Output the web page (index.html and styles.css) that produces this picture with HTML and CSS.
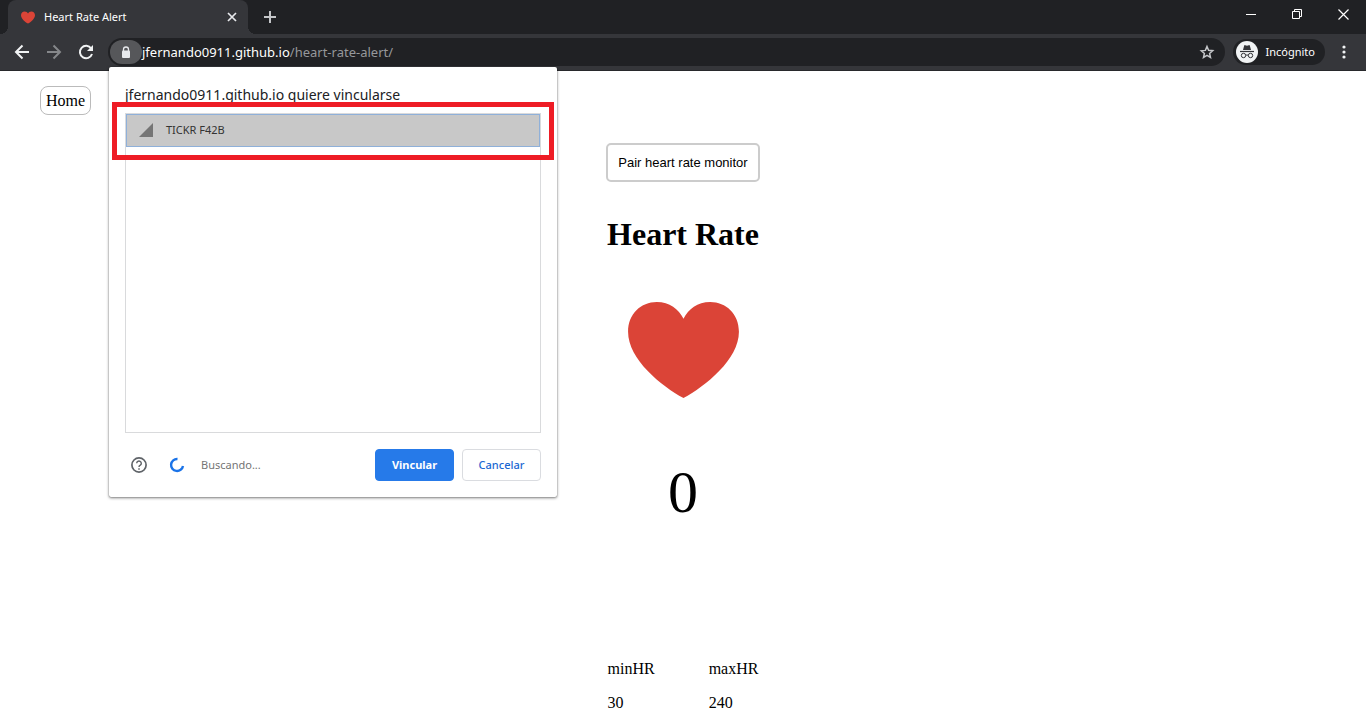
FILE: index.html
```html
<!DOCTYPE html>
<html lang="es">
<head>
<meta charset="utf-8">
<title>Heart Rate Alert</title>
<link rel="stylesheet" href="styles.css">
</head>
<body>
<header class="browser">
  <div class="tabstrip">
    <div class="tab">
      <svg class="favicon" viewBox="0 0 112 97" aria-hidden="true"><path class="heart-fill" d="M56 97C34 85 0 58 0 30C0 12 13 0 29 0C42 0 51 7 56 17C61 7 70 0 83 0C99 0 112 12 112 30C112 58 78 85 56 97Z"/></svg>
      <span class="tab-title">Heart Rate Alert</span>
      <button class="icon-button tab-close" aria-label="Cerrar pestaña"><svg width="10" height="10" viewBox="0 0 10 10"><path d="M1 1l8 8M9 1l-8 8" stroke="#e8eaed" stroke-width="1.700"/></svg></button>
    </div>
    <button class="icon-button new-tab" aria-label="Nueva pestaña"><svg width="12" height="12" viewBox="0 0 12 12"><path d="M6 0v12M0 6h12" stroke="#c4c6c9" stroke-width="2"/></svg></button>
    <div class="window-controls">
      <button class="icon-button" aria-label="Minimizar"><svg width="11" height="11" viewBox="0 0 11 11"><path d="M0 5.500h10" stroke="#fff"/></svg></button>
      <button class="icon-button" aria-label="Restaurar"><svg width="11" height="11" viewBox="0 0 11 11"><path d="M.5 2.500h7v7h-7zM2.500 2.500v-2h7v7h-2" fill="none" stroke="#fff"/></svg></button>
      <button class="icon-button" aria-label="Cerrar"><svg width="11" height="11" viewBox="0 0 11 11"><path d="M.5.5l10 10M10.500.5l-10 10" stroke="#fff" stroke-width="1.200"/></svg></button>
    </div>
  </div>
  <div class="toolbar">
    <button class="icon-button nav" aria-label="Atrás"><svg width="16" height="16" viewBox="0 0 16 16"><path d="M15 8H2M8.500 1.500L2 8l6.500 6.500" fill="none" stroke="#f1f3f4" stroke-width="2"/></svg></button>
    <button class="icon-button nav" aria-label="Adelante"><svg width="16" height="16" viewBox="0 0 16 16"><path d="M1 8h13M7.500 1.500L14 8l-6.500 6.500" fill="none" stroke="#85878a" stroke-width="2"/></svg></button>
    <button class="icon-button nav" aria-label="Recargar"><svg width="16" height="16" viewBox="0 0 16 16"><path d="M13.200 4.500A6.200 6.200 0 1 0 14 10" fill="none" stroke="#f1f3f4" stroke-width="2"/><path d="M15 1v6H9z" fill="#f1f3f4"/></svg></button>
    <div class="omnibox">
      <button class="icon-button lock" aria-label="Información del sitio"><svg width="10" height="13" viewBox="0 0 10 13"><path d="M2.500 5V3.500a2.500 2.500 0 0 1 5 0V5" fill="none" stroke="#e8eaed" stroke-width="1.300"/><rect x="1" y="4.500" width="8" height="7.500" rx="1" fill="#e8eaed"/></svg></button>
      <span class="url"><span class="host">jfernando0911.github.io</span>/heart-rate-alert/</span>
      <button class="icon-button star" aria-label="Añadir a marcadores"><svg width="16" height="16" viewBox="0 0 16 16"><path d="M8 2.500l1.600 3.800 4.100.4-3.100 2.700.9 4L8 11.400l-3.500 2.100.9-4-3.100-2.700 4.100-.4z" fill="none" stroke="#c4c6c9" stroke-width="1.500"/></svg></button>
    </div>
    <div class="profile">
      <svg width="22" height="22" viewBox="0 0 22 22" aria-hidden="true"><circle cx="11" cy="11" r="11" fill="#f1f3f4"/><path d="M7 9l1.200-4.500q.3-.6 1-.3l1.800.6 1.800-.6q.7-.3 1 .3L15 9z" fill="#333438"/><path d="M4 10.500h14" stroke="#333438" stroke-width="1.200"/><circle cx="7.500" cy="14.500" r="2.200" fill="none" stroke="#333438"/><circle cx="14.500" cy="14.500" r="2.200" fill="none" stroke="#333438"/><path d="M9.700 14.300q1.300-.8 2.600 0" fill="none" stroke="#333438"/></svg>
      <span>Incógnito</span>
    </div>
    <button class="icon-button menu" aria-label="Menú"><svg width="4" height="14" viewBox="0 0 4 14" fill="#f1f3f4"><circle cx="2" cy="2" r="1.600"/><circle cx="2" cy="7" r="1.600"/><circle cx="2" cy="12" r="1.600"/></svg></button>
  </div>
</header>

<div class="page">
  <nav><a class="home" href="#">Home</a></nav>
  <main class="monitor">
    <button class="pair">Pair heart rate monitor</button>
    <h1>Heart Rate</h1>
    <svg class="heart" viewBox="0 0 112 97" aria-hidden="true"><path class="heart-fill" d="M56 97C34 85 0 58 0 30C0 12 13 0 29 0C42 0 51 7 56 17C61 7 70 0 83 0C99 0 112 12 112 30C112 58 78 85 56 97Z"/></svg>
    <output class="rate">0</output>
    <dl class="limits">
      <div><dt>minHR</dt><dd>30</dd></div>
      <div><dt>maxHR</dt><dd>240</dd></div>
    </dl>
  </main>
</div>

<section class="chooser" role="dialog" aria-labelledby="chooser-title">
  <h2 id="chooser-title">jfernando0911.github.io quiere vincularse</h2>
  <div class="devices">
    <button class="device"><svg width="14" height="14" viewBox="0 0 14 14" aria-hidden="true"><path d="M0 14L14 0v14z" fill="#757575"/></svg>TICKR F42B</button>
    <div class="highlight"></div>
  </div>
  <div class="actions">
    <button class="icon-button help" aria-label="Ayuda"><svg width="16" height="16" viewBox="0 0 16 16" fill="none" stroke="#5f6368"><circle cx="8" cy="8" r="7.100" stroke-width="1.700"/><path d="M5.700 6.300a2.300 2.300 0 1 1 3.600 1.900Q8 9 8 10" stroke-width="1.400"/><path d="M8 11.200v1.500" stroke-width="1.500"/></svg></button>
    <svg width="16" height="16" viewBox="0 0 16 16" aria-hidden="true"><path d="M8.500 2A6 6 0 1 0 14 9" fill="none" stroke="#1a73e8" stroke-width="2.400"/></svg>
    <span class="status">Buscando...</span>
    <button class="action primary">Vincular</button>
    <button class="action">Cancelar</button>
  </div>
</section>
</body>
</html>
```
FILE: styles.css
```css
* {
  box-sizing: border-box;
}

body {
  margin: 0;
  min-height: 100vh;
  overflow: hidden;
  background: #fff;
  color: #000;
  font: 16px/18px "Liberation Serif", serif;
}

button {
  font: inherit;
  cursor: pointer;
}

svg {
  display: block;
  flex: none;
}

.icon-button {
  display: flex;
  align-items: center;
  justify-content: center;
  flex: none;
  padding: 0;
  border: 0;
  background: none;
}

.heart-fill {
  fill: #db4437;
}

.browser {
  background: #35363a;
  font-family: "Noto Sans", sans-serif;
}

.tabstrip {
  display: flex;
  height: 34px;
  background: #202124;
  padding-left: 8px;
}

.tab {
  position: relative;
  display: flex;
  align-items: center;
  width: 240px;
  padding: 0 11px 0 13px;
  border-radius: 8px 8px 0 0;
  background: #35363a;
  color: #fff;
  font-size: 11px;
}

.tab::before,
.tab::after {
  content: "";
  position: absolute;
  bottom: 0;
  width: 8px;
  height: 8px;
}

.tab::before {
  left: -8px;
  background: radial-gradient(circle at 0 0, #202124 8px, #35363a 8px);
}

.tab::after {
  right: -8px;
  background: radial-gradient(circle at 100% 0, #202124 8px, #35363a 8px);
}

.favicon {
  width: 14px;
  height: 13px;
}

.tab-title {
  flex: 1;
  margin-left: 9px;
}

.new-tab {
  width: 28px;
  margin-left: 8px;
}

.window-controls {
  display: flex;
  height: 29px;
  margin-left: auto;
}

.window-controls button {
  width: 46px;
}

.toolbar {
  display: flex;
  align-items: center;
  height: 37px;
  padding: 0 8px 0 6px;
  border-bottom: 1px solid #28292c;
}

.nav {
  width: 32px;
  height: 28px;
}

.omnibox {
  display: flex;
  flex: 1;
  align-items: center;
  height: 28px;
  margin: 0 8px 0 6px;
  padding: 0 10px 0 2px;
  border-radius: 14px;
  background: #202124;
}

.lock {
  width: 32px;
  height: 24px;
  border-radius: 12px;
  background: #56575a;
}

.url {
  flex: 1;
  color: #96989b;
  font-size: 13px;
}

.host {
  color: #fff;
}

.profile {
  display: flex;
  align-items: center;
  gap: 8px;
  height: 26px;
  padding: 0 10px 0 3px;
  border-radius: 13px;
  background: #202124;
  color: #fff;
  font-size: 11px;
}

.menu {
  width: 28px;
  height: 28px;
  margin-left: 5px;
}

.page {
  padding: 15px 40px 0;
}

.home {
  display: inline-block;
  padding: 5px;
  border: 1px solid #bbb;
  border-radius: 8px;
  color: #000;
  line-height: 17px;
  text-decoration: none;
}

.monitor {
  display: flex;
  flex-direction: column;
  align-items: center;
  margin-top: 28px;
}

.pair {
  padding: 10px;
  border: 2px solid #ccc;
  border-radius: 5px;
  background: #fff;
  color: #000;
  font: 13px/15px "Liberation Sans", sans-serif;
}

h1 {
  margin: 33px 0 49px;
  font-size: 32px;
  line-height: 38px;
}

.heart {
  width: 111px;
  height: 96px;
}

.rate {
  margin-top: 60px;
  font-size: 60px;
  line-height: 68px;
}

.limits {
  display: flex;
  gap: 54px;
  margin: 134px 0 0;
}

.limits div {
  display: grid;
  gap: 16px;
}

.limits dd {
  margin: 0;
}

.chooser {
  position: absolute;
  top: 67px;
  left: 109px;
  width: 448px;
  padding: 18px 16px 16px;
  border-radius: 2px;
  background: #fff;
  box-shadow: 0 1px 3px rgba(0, 0, 0, 0.5), 0 0 1px rgba(0, 0, 0, 0.5);
  color: #202124;
  font: 11px/16px "Noto Sans", sans-serif;
}

.chooser h2 {
  margin: 0 0 8px;
  font-size: 14px;
  line-height: 20px;
  font-weight: 400;
}

.devices {
  position: relative;
  height: 320px;
  border: 1px solid #d9dadc;
}

.device {
  display: flex;
  align-items: center;
  gap: 13px;
  width: 100%;
  height: 33px;
  padding: 0 12px 2px;
  border: 1px solid #8fb0d9;
  background: #c8c8c8;
  color: #333;
}

.highlight {
  position: absolute;
  inset: -12px -14px auto;
  height: 58px;
  border: 5px solid #ee1c25;
  pointer-events: none;
}

.actions {
  display: flex;
  align-items: center;
  margin-top: 16px;
}

.help {
  width: 28px;
  height: 28px;
  margin-right: 16px;
}

.status {
  flex: 1;
  margin-left: 16px;
  color: #757575;
}

.action {
  width: 79px;
  height: 32px;
  margin-left: 8px;
  padding: 0;
  border: 1px solid #dadce0;
  border-radius: 4px;
  background: #fff;
  color: #1967d2;
  font-weight: 500;
}

.primary {
  border-color: #267ae9;
  background: #267ae9;
  color: #fff;
  font-weight: 700;
}
```
